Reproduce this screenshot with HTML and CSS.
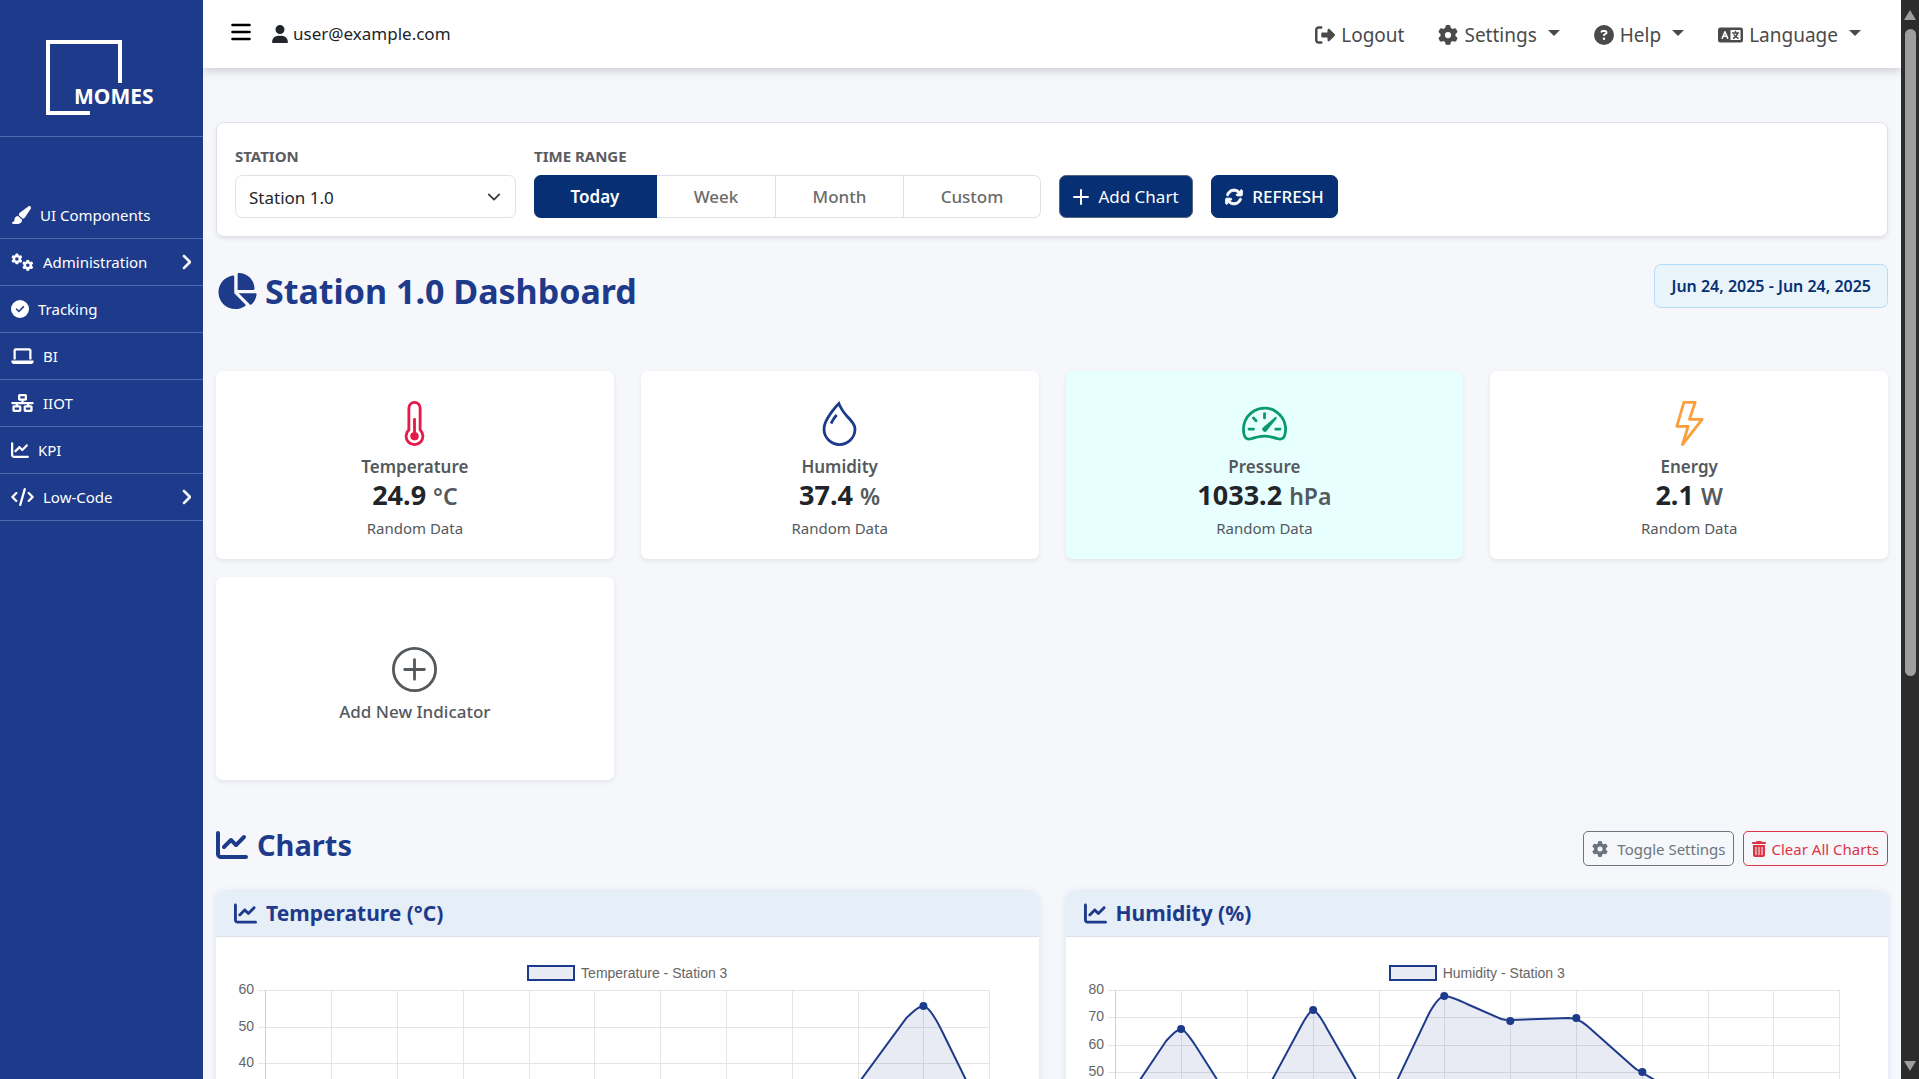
FILE: index.html
```html
<!DOCTYPE html>
<html lang="en">
<head>
<meta charset="utf-8">
<meta name="viewport" content="width=device-width, initial-scale=1">
<title>MOMES - Station 1.0 Dashboard</title>
<link rel="stylesheet" href="styles.css">
</head>
<body>
<svg class="sprite" aria-hidden="true">
  <symbol id="i-gear" viewBox="0 0 512 512"><path d="M495.9 166.6c3.2 8.7 .5 18.4-6.4 24.6l-43.3 39.4c1.1 8.3 1.7 16.8 1.7 25.4s-.6 17.1-1.7 25.4l43.3 39.4c6.9 6.2 9.6 15.9 6.4 24.6c-4.4 11.9-9.7 23.3-15.8 34.3l-4.7 8.1c-6.6 11-14 21.4-22.1 31.2c-5.9 7.2-15.7 9.6-24.5 6.8l-55.7-17.7c-13.4 10.3-28.2 18.9-44 25.4l-12.5 57.1c-2 9.1-9 16.3-18.2 17.8c-13.8 2.3-28 3.5-42.5 3.5s-28.7-1.2-42.5-3.5c-9.2-1.5-16.2-8.7-18.2-17.8l-12.5-57.1c-15.8-6.5-30.6-15.1-44-25.4L83.1 425.9c-8.8 2.8-18.6 .3-24.5-6.8c-8.1-9.8-15.5-20.2-22.1-31.2l-4.7-8.1c-6.1-11-11.4-22.4-15.8-34.3c-3.2-8.7-.5-18.4 6.4-24.6l43.3-39.4C64.6 273.1 64 264.6 64 256s.6-17.1 1.7-25.4L22.4 191.2c-6.9-6.2-9.6-15.9-6.4-24.6c4.4-11.9 9.7-23.3 15.8-34.3l4.7-8.1c6.6-11 14-21.4 22.1-31.2c5.9-7.2 15.7-9.6 24.5-6.8l55.7 17.7c13.4-10.3 28.2-18.9 44-25.4l12.5-57.1c2-9.1 9-16.3 18.2-17.8C227.3 1.2 241.5 0 256 0s28.7 1.2 42.5 3.5c9.2 1.5 16.2 8.7 18.2 17.8l12.5 57.1c15.8 6.5 30.6 15.1 44 25.4l55.7-17.7c8.8-2.8 18.6-.3 24.5 6.8c8.1 9.8 15.5 20.2 22.1 31.2l4.7 8.1c6.1 11 11.4 22.4 15.8 34.3zM256 336a80 80 0 1 0 0-160 80 80 0 1 0 0 160z"/></symbol>
  <symbol id="i-line" viewBox="0 0 512 512"><path d="M64 64c0-17.7-14.3-32-32-32S0 46.3 0 64V400c0 44.2 35.8 80 80 80H480c17.7 0 32-14.3 32-32s-14.3-32-32-32H80c-8.8 0-16-7.2-16-16V64zm406.6 86.6c12.5-12.5 12.5-32.8 0-45.3s-32.8-12.5-45.3 0L320 210.7l-57.4-57.4c-12.5-12.5-32.8-12.5-45.3 0l-112 112c-12.5 12.5-12.5 32.8 0 45.3s32.8 12.5 45.3 0L240 221.3l57.4 57.4c12.5 12.5 32.8 12.5 45.3 0l128-128z"/></symbol>
  <symbol id="i-right" viewBox="0 0 320 512"><path stroke="currentColor" stroke-width="26" d="M310.6 233.4c12.5 12.5 12.5 32.8 0 45.3l-192 192c-12.5 12.5-32.8 12.5-45.3 0s-12.5-32.8 0-45.3L242.7 256 73.4 86.6c-12.5-12.5-12.5-32.8 0-45.3s32.8-12.5 45.3 0l192 192z"/></symbol>
</svg>
<div class="app">
  <aside class="sidebar">
    <a class="brand" href="#" aria-label="MOMES home">
      <svg class="logo" viewBox="0 0 112 77"><path d="M74 43V2H2v71h42" fill="none" stroke="#fff" stroke-width="4"/><text class="logo-text" x="28" y="64">MOMES</text></svg>
    </a>
    <nav class="side-nav" aria-label="Main">
      <a href="#"><svg class="w20" viewBox="0 0 576 512"><path d="M339.3 367.1c27.3-3.9 51.9-19.4 67.2-42.9L568.2 74.1c12.6-19.5 9.4-45.3-7.6-61.2S517.7-4.4 499.1 9.6L262.4 187.2c-24 18-38.2 46.1-38.4 76.1L339.3 367.1zm-19.6 25.4l-116-104.4C143.9 290.3 96 339.6 96 400c0 3.9 .2 7.8 .6 11.6C98.4 429.1 86.4 448 68.8 448H64c-17.7 0-32 14.3-32 32s14.3 32 32 32H208c61.9 0 112-50.1 112-112c0-2.5-.1-5-.2-7.5z"/></svg><span>UI Components</span></a>
      <a href="#"><svg class="w23" viewBox="0 0 640 512"><use href="#i-gear" x="0" y="10" width="320" height="320"/><use href="#i-gear" x="310" y="190" width="320" height="320"/></svg><span>Administration</span><svg class="chev" viewBox="0 0 320 512"><use href="#i-right"/></svg></a>
      <a href="#"><svg class="w18" viewBox="0 0 512 512"><circle cx="256" cy="256" r="256"/><path d="M160 262l64 64 128-130" fill="none" stroke="#1e3a8a" stroke-width="46" stroke-linecap="round"/></svg><span>Tracking</span></a>
      <a href="#"><svg class="w23" viewBox="0 0 640 512"><path d="M128 32C92.7 32 64 60.7 64 96V352h64V96H512V352h64V96c0-35.3-28.7-64-64-64H128zM19.2 384C8.6 384 0 392.6 0 403.2C0 445.6 34.4 480 76.8 480H563.2c42.4 0 76.8-34.4 76.8-76.8c0-10.6-8.6-19.2-19.2-19.2H19.2z"/></svg><span>BI</span></a>
      <a href="#"><svg class="w23" viewBox="0 0 640 512"><path d="M256 64H384v64H256V64zM240 0c-26.5 0-48 21.5-48 48v96c0 26.5 21.5 48 48 48h48v32H32c-17.7 0-32 14.3-32 32s14.3 32 32 32h96v32H80c-26.5 0-48 21.5-48 48v96c0 26.5 21.5 48 48 48H240c26.5 0 48-21.5 48-48V368c0-26.5-21.5-48-48-48H192V288H448v32H400c-26.5 0-48 21.5-48 48v96c0 26.5 21.5 48 48 48H560c26.5 0 48-21.5 48-48V368c0-26.5-21.5-48-48-48H512V288h96c17.7 0 32-14.3 32-32s-14.3-32-32-32H352V192h48c26.5 0 48-21.5 48-48V48c0-26.5-21.5-48-48-48H240zM96 448V384H224v64H96zm320-64H544v64H416V384z"/></svg><span>IIOT</span></a>
      <a href="#"><svg class="w18"><use href="#i-line"/></svg><span>KPI</span></a>
      <a href="#"><svg class="w23" viewBox="0 0 640 512"><path d="M392.8 1.2c-17-4.9-34.7 5-39.6 22l-128 448c-4.9 17 5 34.7 22 39.6s34.7-5 39.6-22l128-448c4.9-17-5-34.7-22-39.6zm80.6 120.1c-12.5 12.5-12.5 32.8 0 45.3L562.7 256l-89.4 89.4c-12.5 12.5-12.5 32.8 0 45.3s32.8 12.5 45.3 0l112-112c12.5-12.5 12.5-32.8 0-45.3l-112-112c-12.5-12.5-32.8-12.5-45.3 0zm-306.7 0c-12.5-12.5-32.8-12.5-45.3 0l-112 112c-12.5 12.5-12.5 32.8 0 45.3l112 112c12.5 12.5 32.8 12.5 45.3 0s12.5-32.8 0-45.3L77.3 256l89.4-89.4c12.5-12.5 12.5-32.8 0-45.3z"/></svg><span>Low-Code</span><svg class="chev" viewBox="0 0 320 512"><use href="#i-right"/></svg></a>
    </nav>
  </aside>

  <div class="page">
    <header class="topbar">
      <button class="menu-btn" type="button" aria-label="Toggle menu"><svg viewBox="0 0 20 18"><path d="M1.500 2h17M1.500 9h17M1.500 16h17" stroke="#000" stroke-width="2.600" stroke-linecap="round"/></svg></button>
      <div class="user"><svg viewBox="0 0 448 512"><path d="M224 256A128 128 0 1 0 224 0a128 128 0 1 0 0 256zm-45.700 48C79.800 304 0 383.800 0 482.300C0 498.700 13.300 512 29.700 512H418.300c16.400 0 29.700-13.300 29.700-29.700C448 383.800 368.200 304 269.700 304H178.300z"/></svg><span>user@example.com</span></div>
      <nav class="top-nav" aria-label="Account">
        <a href="#"><svg class="w20" viewBox="0 0 512 512"><path d="M377.9 105.9L500.7 228.7c7.2 7.2 11.3 17.1 11.3 27.3s-4.1 20.1-11.3 27.3L377.9 406.1c-6.4 6.4-15 9.9-24 9.9c-18.7 0-33.9-15.2-33.9-33.9l0-62.1-128 0c-17.7 0-32-14.3-32-32l0-64c0-17.7 14.3-32 32-32l128 0 0-62.1c0-18.7 15.2-33.9 33.9-33.9c9 0 17.6 3.6 24 9.9zM160 96L96 96c-17.7 0-32 14.3-32 32l0 256c0 17.7 14.3 32 32 32l64 0c17.7 0 32 14.3 32 32s-14.3 32-32 32l-64 0c-53 0-96-43-96-96L0 128C0 75 43 32 96 32l64 0c17.7 0 32 14.3 32 32s-14.3 32-32 32z"/></svg><span>Logout</span></a>
        <a href="#"><svg class="w20"><use href="#i-gear"/></svg><span>Settings</span><i class="caret"></i></a>
        <a href="#"><svg class="w20" viewBox="0 0 512 512"><path d="M256 512A256 256 0 1 0 256 0a256 256 0 1 0 0 512zM169.8 165.300c7.900-22.300 29.100-37.300 52.800-37.300h58.300c34.900 0 63.100 28.300 63.100 63.100c0 22.600-12.100 43.500-31.700 54.800L280 264.400c-.2 13-10.900 23.600-24 23.600c-13.300 0-24-10.700-24-24V250.500c0-8.600 4.600-16.500 12.100-20.800l44.300-25.400c4.700-2.700 7.600-7.700 7.600-13.100c0-8.400-6.800-15.100-15.100-15.100H222.600c-3.400 0-6.400 2.100-7.500 5.300l-.4 1.200c-4.400 12.500-18.200 19-30.600 14.600s-19-18.200-14.600-30.600l.4-1.200zM224 352a32 32 0 1 1 64 0 32 32 0 1 1 -64 0z"/></svg><span>Help</span><i class="caret"></i></a>
        <a href="#"><svg class="w25" viewBox="0 0 640 512"><rect y="64" width="640" height="384" rx="64"/><path d="M320 128h256v256H320z" fill="#fff"/><path d="M108 338l70-164 70 164M132 286h92" fill="none" stroke="#fff" stroke-width="40" stroke-linecap="round" stroke-linejoin="round"/><path d="M448 166v34M374 204h150M502 206c-14 60-52 108-106 134M412 250c22 40 62 74 102 90" fill="none" stroke="#4a4a4a" stroke-width="38" stroke-linecap="round"/></svg><span>Language</span><i class="caret"></i></a>
      </nav>
    </header>

    <main>
      <form class="filters">
        <div class="field">
          <label for="station">Station</label>
          <div class="select"><select id="station"><option>Station 1.0</option></select><svg viewBox="0 0 16 16"><path d="M2 5l6 6 6-6" fill="none" stroke="#343a40" stroke-width="2" stroke-linecap="round" stroke-linejoin="round"/></svg></div>
        </div>
        <div class="field" role="group" aria-labelledby="range-label">
          <span class="label" id="range-label">Time Range</span>
          <div class="segments">
            <button type="button" class="seg seg-today active" aria-pressed="true">Today</button>
            <button type="button" class="seg seg-week">Week</button>
            <button type="button" class="seg seg-month">Month</button>
            <button type="button" class="seg seg-custom">Custom</button>
          </div>
        </div>
        <button type="button" class="btn-solid add"><svg viewBox="0 0 16 16"><path d="M8 1v14M1 8h14" stroke="#fff" stroke-width="2" stroke-linecap="round"/></svg>Add Chart</button>
        <button type="button" class="btn-solid refresh"><svg viewBox="0 0 512 512"><path d="M105.1 202.6c7.7-21.8 20.2-42.3 37.8-59.8c62.5-62.5 163.8-62.5 226.3 0L386.3 160H352c-17.7 0-32 14.3-32 32s14.3 32 32 32H463.5h.4c17.7 0 32-14.3 32-32V80c0-17.7-14.3-32-32-32s-32 14.3-32 32v35.200L414.400 97.600c-87.500-87.500-229.300-87.500-316.800 0C73.200 122 55.600 150.700 44.800 181.400c-5.900 16.700 2.900 34.900 19.500 40.800s34.900-2.900 40.800-19.500zM39 289.300c-5 1.500-9.800 4.200-13.700 8.200c-4 4-6.700 8.800-8.100 14c-.3 1.200-.6 2.500-.8 3.800c-.3 1.700-.4 3.400-.4 5.100V432c0 17.700 14.300 32 32 32s32-14.300 32-32V396.900l17.600 17.500c87.500 87.400 229.300 87.400 316.700 0c24.400-24.400 42.100-53.100 52.900-83.700c5.900-16.700-2.900-34.900-19.500-40.800s-34.900 2.900-40.800 19.500c-7.700 21.800-20.200 42.300-37.800 59.800c-62.500 62.500-163.800 62.500-226.300 0l-.1-.1L125.600 352H160c17.700 0 32-14.300 32-32s-14.300-32-32-32H48.400c-1.600 0-3.200 .1-4.800 .3s-3.100 .5-4.600 1z" fill="#fff" stroke="#fff" stroke-width="24"/></svg>REFRESH</button>
      </form>

      <div class="title-row">
        <h1><svg viewBox="0 0 576 512"><path d="M304 240V16.6c0-9 7-16.6 16-16.6C443.7 0 544 100.3 544 224c0 9-7.6 16-16.6 16H304zM32 272C32 150.7 122.1 50.3 239 34.3c9.2-1.3 17 6.1 17 15.4V288L412.5 444.5c6.7 6.7 6.2 17.7-1.5 23.1C371.8 495.6 323.8 512 272 512C139.5 512 32 404.6 32 272zm526.4 16c9.3 0 16.6 7.8 15.4 17c-7.7 55.9-34.6 105.6-73.9 142.3c-6 5.6-15.4 5.2-21.2-.7L320 288H558.4z"/></svg>Station 1.0 Dashboard</h1>
        <p class="dates">Jun 24, 2025 - Jun 24, 2025</p>
      </div>

      <section class="indicators" aria-label="Indicators">
        <article class="card">
          <svg class="red" viewBox="0 0 16 16"><path d="M9.5 12.5a1.5 1.5 0 1 1-2-1.415V6.500a.5.5 0 0 1 1 0v4.585a1.500 1.500 0 0 1 1 1.415z"/><path d="M5.500 2.500a2.500 2.500 0 0 1 5 0v7.550a3.500 3.500 0 1 1-5 0V2.500zM8 1a1.500 1.500 0 0 0-1.500 1.500v7.987l-.167.15a2.500 2.500 0 1 0 3.333 0l-.166-.15V2.500A1.500 1.500 0 0 0 8 1z"/></svg>
          <h2>Temperature</h2><p class="value">24.9 <span>°C</span></p><p class="note">Random Data</p>
        </article>
        <article class="card">
          <svg class="blue" viewBox="0 0 16 16"><path fill-rule="evenodd" d="M7.21.8C7.69.295 8 0 8 0c.109.363.234.708.371 1.038.812 1.946 2.073 3.35 3.197 4.6C12.878 7.096 14 8.345 14 10a6 6 0 0 1-12 0C2 6.668 5.58 2.517 7.21.8zm.413 1.021A31.25 31.25 0 0 0 5.794 3.990c-.726.95-1.436 2.008-1.960 3.070C3.304 8.133 3 9.138 3 10a5 5 0 0 0 10 0c0-1.201-.796-2.157-2.181-3.700l-.03-.032C9.750 5.110 8.500 3.720 7.623 1.820z"/><path d="M4.553 7.776c.82-1.641 1.717-2.753 2.093-3.130l.708.708c-.29.29-1.128 1.311-1.907 2.870l-.894-.448z"/></svg>
          <h2>Humidity</h2><p class="value">37.4 <span>%</span></p><p class="note">Random Data</p>
        </article>
        <article class="card highlight">
          <svg class="green" viewBox="0 0 16 16"><path d="M8 4a.5.5 0 0 1 .5.5V6a.5.5 0 0 1-1 0V4.500A.5.5 0 0 1 8 4zM3.732 5.732a.5.5 0 0 1 .707 0l.915.914a.5.5 0 1 1-.708.708l-.914-.915a.5.5 0 0 1 0-.707zM2 10a.5.5 0 0 1 .5-.5h1.586a.5.5 0 0 1 0 1H2.500A.5.5 0 0 1 2 10zm9.500 0a.5.5 0 0 1 .5-.5h1.500a.5.5 0 0 1 0 1H12a.5.5 0 0 1-.5-.5zm.754-4.246a.389.389 0 0 0-.527-.02L7.547 9.310a.91.91 0 1 0 1.302 1.258l3.434-4.297a.389.389 0 0 0-.029-.518z"/><path fill-rule="evenodd" d="M0 10a8 8 0 1 1 15.547 2.661c-.442 1.253-1.845 1.602-2.932 1.250C11.309 13.488 9.475 13 8 13c-1.474 0-3.310.488-4.615.911-1.087.352-2.490.003-2.932-1.250A7.988 7.988 0 0 1 0 10zm8-7a7 7 0 0 0-6.603 9.329c.203.575.923.876 1.680.63C4.397 12.533 6.358 12 8 12s3.604.532 4.923.96c.757.245 1.477-.056 1.680-.631A7 7 0 0 0 8 3z"/></svg>
          <h2>Pressure</h2><p class="value">1033.2 <span>hPa</span></p><p class="note">Random Data</p>
        </article>
        <article class="card">
          <svg class="orange" viewBox="0 0 16 16"><path d="M5.520.359A.5.5 0 0 1 6 0h4a.5.5 0 0 1 .474.658L8.694 6H12.500a.5.5 0 0 1 .395.807l-7 9a.5.5 0 0 1-.873-.454L6.823 9.500H3.500a.5.5 0 0 1-.48-.641l2.500-8.500zM6.374 1 4.168 8.500H7.500a.5.5 0 0 1 .478.647L6.780 13.040 11.478 7H8a.5.5 0 0 1-.474-.658L9.306 1H6.374z"/></svg>
          <h2>Energy</h2><p class="value">2.1 <span>W</span></p><p class="note">Random Data</p>
        </article>
        <button type="button" class="card add-card">
          <svg viewBox="0 0 16 16"><path d="M8 4.500v7M4.500 8h7" stroke="currentColor" stroke-linecap="round"/><circle cx="8" cy="8" r="7.500" fill="none" stroke="currentColor"/></svg>
          <span>Add New Indicator</span>
        </button>
      </section>

      <div class="charts-head">
        <h2><svg><use href="#i-line"/></svg>Charts</h2>
        <div class="actions">
          <button type="button" class="btn-line grey"><svg><use href="#i-gear"/></svg>Toggle Settings</button>
          <button type="button" class="btn-line danger"><svg viewBox="0 0 448 512"><path fill-rule="evenodd" d="M135 18c5-11 16-18 29-18h120c12 0 23 7 28 18l8 14h96c18 0 32 14 32 32s-14 32-32 32H32C14 96 0 82 0 64s14-32 32-32h96zM32 128h384v320c0 35-29 64-64 64H96c-35 0-64-29-64-64zm80 64v256h32V192zm96 0v256h32V192zm96 0v256h32V192z"/></svg>Clear All Charts</button>
        </div>
      </div>

      <section class="charts" aria-label="Charts">
        <article class="chart">
          <h3><svg><use href="#i-line"/></svg>Temperature (°C)</h3>
          <div class="legend"><i></i>Temperature - Station 3</div>
          <svg class="plot" viewBox="0 -2 822 302" role="img" aria-label="Temperature line chart">
            <path class="grid" d="M42 7H773M42 44H773M42 80H773M42 117H773M42 154H773M115 7V290M181 7V290M247 7V290M313 7V290M378 7V290M444 7V290M510 7V290M576 7V290M642 7V290M707 7V290M773 7V290"/>
            <path class="axis" d="M49 7V290"/>
            <path class="area" d="M576 190L690 35Q702 23 707 23Q714 24 727 51L756 110L773 150V290H576z"/>
            <path class="line" d="M576 190L690 35Q702 23 707 23Q714 24 727 51L756 110L773 150"/>
            <circle cx="707" cy="23" r="4"/>
            <g class="ticks"><text x="38" y="11">60</text><text x="38" y="48">50</text><text x="38" y="84">40</text></g>
          </svg>
        </article>
        <article class="chart">
          <h3><svg><use href="#i-line"/></svg>Humidity (%)</h3>
          <div class="legend"><i></i>Humidity - Station 3</div>
          <svg class="plot" viewBox="0 -2 822 302" role="img" aria-label="Humidity line chart">
            <path class="grid" d="M42 7H773M42 34H773M42 62H773M42 89H773M42 117H773M115 7V290M181 7V290M247 7V290M313 7V290M378 7V290M444 7V290M510 7V290M576 7V290M642 7V290M707 7V290M773 7V290"/>
            <path class="axis" d="M49 7V290"/>
            <path class="area" d="M49 134L100 58Q111 46 115 46Q119 47 129 62L150 95Q181 160 207 95L235 43Q243 28 247 27Q252 29 261 46L289 95Q312 150 332 95L363 30Q372 14 378 13Q384 13 403 22L435 36Q438 37 444 37L502 35Q512 35 521 43L566 83Q570 87 575 89L610 110V290H49z"/>
            <path class="line" d="M49 134L100 58Q111 46 115 46Q119 47 129 62L150 95Q181 160 207 95L235 43Q243 28 247 27Q252 29 261 46L289 95Q312 150 332 95L363 30Q372 14 378 13Q384 13 403 22L435 36Q438 37 444 37L502 35Q512 35 521 43L566 83Q570 87 575 89L610 110"/>
            <circle cx="115" cy="46" r="4"/><circle cx="247" cy="27" r="4"/><circle cx="378" cy="13" r="4"/><circle cx="444" cy="38" r="4"/><circle cx="510" cy="35" r="4"/><circle cx="576" cy="89" r="4"/>
            <g class="ticks"><text x="38" y="11">80</text><text x="38" y="38">70</text><text x="38" y="66">60</text><text x="38" y="93">50</text></g>
          </svg>
        </article>
      </section>
    </main>
  </div>

  <div class="scrollbar" aria-hidden="true">
    <i class="up"></i><i class="thumb"></i><i class="down"></i>
  </div>
</div>
</body>
</html>
```

FILE: styles.css
```css
* { box-sizing: border-box; }
body, h1, h2, h3, p { margin: 0; }
body {
  height: 100vh;
  overflow: hidden;
  background: #f5f7fb;
  color: #212529;
  font: 15px/24px "Noto Sans", sans-serif;
}
a { color: inherit; text-decoration: none; }
button, select { font: inherit; color: inherit; }
svg { flex: none; fill: currentColor; }
.sprite { display: none; }
.w18 { width: 18px; height: 18px; }
.w20 { width: 20px; height: 20px; }
.w23 { width: 23px; height: 18px; }
.w25 { width: 25px; height: 20px; }

.app {
  display: grid;
  grid-template-columns: 203px minmax(0, 1fr) 18px;
  height: 100vh;
}

/* Sidebar */
.sidebar { background: #1e3a8a; color: #fff; }
.brand {
  display: block;
  height: 137px;
  padding: 40px 46px;
  border-bottom: 1px solid #4a6db0;
}
.logo { display: block; width: 112px; height: 77px; }
.logo-text { font: 700 21px "Noto Sans", sans-serif; }
.side-nav { margin-top: 55px; font-size: 15px; }
.side-nav a {
  display: flex;
  align-items: center;
  gap: 9px;
  height: 47px;
  padding: 0 12px 0 11px;
  border-bottom: 1px solid #4a6db0;
}
.side-nav .chev { width: 10px; height: 16px; margin-left: auto; }

/* Top bar */
.page { display: flex; flex-direction: column; min-width: 0; overflow: hidden; }
.topbar {
  display: flex;
  flex: none;
  align-items: center;
  height: 68px;
  padding: 0 40px 0 28px;
  background: #fff;
  box-shadow: 0 2px 10px rgba(0, 0, 0, .2);
}
.menu-btn { padding: 0; border: 0; background: none; margin-bottom: 4px; }
.menu-btn svg { display: block; width: 20px; height: 18px; }
.user { display: flex; align-items: center; gap: 5px; margin-left: 21px; font-size: 17px; }
.user svg { width: 16px; height: 18px; }
.top-nav { display: flex; gap: 34px; margin-left: auto; padding-top: 2px; color: #4a4a4a; font-size: 19px; }
.top-nav a { display: flex; align-items: center; gap: 6px; }
.caret {
  margin: 0 0 4px 5px;
  border: 6px solid transparent;
  border-top-color: currentColor;
  border-bottom: 0;
}

/* Filters */
main { padding: 54px 13px 0; }
.filters {
  display: flex;
  align-items: flex-end;
  gap: 18px;
  height: 115px;
  padding: 0 18px 18px;
  background: #fff;
  border: 1px solid #dee2e6;
  border-radius: 8px;
  box-shadow: 0 2px 4px rgba(0, 0, 0, .08);
}
.field label, .field .label {
  display: block;
  margin-bottom: 7px;
  color: #5a5c60;
  font-size: 15px;
  font-weight: 700;
  text-transform: uppercase;
}
.select { display: grid; width: 281px; align-items: center; }
.select > * { grid-area: 1 / 1; }
.select select {
  height: 43px;
  padding: 2px 13px 0;
  background: #fff;
  border: 1px solid #dee2e6;
  border-radius: 7px;
  appearance: none;
  font-size: 17px;
}
.select svg { justify-self: end; width: 14px; height: 14px; margin-right: 15px; pointer-events: none; }
.segments { display: flex; height: 43px; }
.seg {
  padding: 0;
  background: #fff;
  border: 1px solid #dee2e6;
  border-left-width: 0;
  color: #6b6b6b;
  font-size: 17px;
  font-weight: 500;
}
.seg-today { width: 123px; border-radius: 7px 0 0 7px; }
.seg-week { width: 119px; }
.seg-month { width: 128px; }
.seg-custom { width: 137px; border-radius: 0 7px 7px 0; }
.seg.active { background: #063073; border-color: #063073; color: #fff; font-weight: 600; }
.btn-solid {
  display: flex;
  align-items: center;
  justify-content: center;
  gap: 9px;
  height: 43px;
  padding: 0;
  background: #063073;
  border: 1px solid #063073;
  border-radius: 7px;
  color: #fff;
  font-size: 17px;
}
.btn-solid svg { width: 16px; height: 16px; }
.btn-solid.add { width: 134px; border-color: #54657f; }
.btn-solid.refresh { width: 127px; font-weight: 500; }
.btn-solid.refresh svg { width: 18px; height: 18px; }

/* Titles */
.title-row { display: flex; justify-content: space-between; margin-top: 27px; height: 107px; }
h1 {
  display: flex;
  align-items: center;
  gap: 8px;
  height: 54px;
  color: #1e3a8a;
  font-size: 34px;
  font-weight: 700;
}
h1 svg { width: 41px; height: 36px; }
.dates {
  display: flex;
  align-items: center;
  height: 44px;
  padding: 0 16px;
  background: #eaf4fb;
  border: 1px solid #b6dcfb;
  border-radius: 7px;
  color: #063073;
  font-size: 16px;
  font-weight: 600;
}

/* Indicators */
.indicators { display: grid; grid-template-columns: repeat(4, minmax(0, 1fr)); gap: 18px 27px; }
.card {
  display: flex;
  flex-direction: column;
  align-items: center;
  height: 188px;
  padding-top: 30px;
  background: #fff;
  border: 0;
  border-radius: 7px;
  box-shadow: 0 2px 5px rgba(0, 0, 0, .08);
}
.card.highlight { background: #e8ffff; }
.card svg { width: 45px; height: 45px; }
.card h2 { margin-top: 10px; color: #54595e; font-size: 17px; font-weight: 600; line-height: 22px; }
.value { font-size: 27px; font-weight: 700; line-height: 34px; }
.value span { color: #54595e; font-size: 23px; font-weight: 600; }
.note { margin-top: 3px; color: #54595e; font-size: 15px; }
.red { color: #e5194a; }
.blue { color: #1e3a8a; }
.green { color: #0a9a6c; }
.orange { color: #fb9f3c; }
.add-card { height: 203px; padding: 13px 0 0; justify-content: center; color: #54595e; }
.add-card span { margin-top: 8px; font-size: 17px; font-weight: 500; }

/* Charts */
.charts-head { display: flex; justify-content: space-between; margin: 47px 0 24px; height: 39px; }
.charts-head h2 { display: flex; align-items: center; gap: 9px; height: 36px; color: #1e3a8a; font-size: 29px; }
.charts-head h2 svg { width: 32px; height: 32px; }
.actions { display: flex; gap: 9px; padding-top: 4px; }
.btn-line {
  display: flex;
  align-items: center;
  justify-content: center;
  height: 35px;
  padding: 0 8px;
  background: none;
  border: 1px solid currentColor;
  border-radius: 5px;
}
.btn-line.grey { gap: 9px; color: #6c757d; }
.btn-line.danger { gap: 5px; color: #dc3545; }
.btn-line svg { width: 16px; height: 16px; }
.btn-line.danger svg { width: 14px; }
.charts { display: grid; grid-template-columns: repeat(2, minmax(0, 1fr)); gap: 27px; }
.chart { background: #fff; border-radius: 9px; box-shadow: 0 2px 7px rgba(30, 58, 138, .12); }
.chart h3 {
  display: flex;
  align-items: center;
  gap: 9px;
  height: 47px;
  padding: 0 18px;
  background: #e6eef8;
  border-bottom: 1px solid #dbe1ea;
  border-radius: 9px 9px 0 0;
  color: #1e3a8a;
  font-size: 21px;
  font-weight: 700;
}
.chart h3 svg { width: 23px; height: 23px; }
.legend {
  display: flex;
  justify-content: center;
  align-items: center;
  gap: 6px;
  height: 16px;
  margin-top: 28px;
  color: #666;
  font: 14px/16px "Liberation Sans", sans-serif;
}
.legend i { width: 48px; height: 16px; background: #e8ebf3; border: 2px solid #1e3a8a; }
.plot { display: block; width: 100%; fill: #1e3a8a; }
.grid, .axis { fill: none; stroke: #e5e5e5; shape-rendering: crispEdges; }
.axis { stroke: #cfcfcf; }
.area { fill: rgba(30, 58, 138, .1); }
.line { fill: none; stroke: #1e3a8a; stroke-width: 2; }
.ticks { fill: #666; font: 14px "Liberation Sans", sans-serif; text-anchor: end; }

/* Page scroll track */
.scrollbar {
  display: flex;
  flex-direction: column;
  align-items: center;
  padding: 10px 0 8px;
  background: #2c2c2c;
}
.up, .down { border: 6px solid transparent; }
.up { border-top: 0; border-bottom: 10px solid #9e9e9e; }
.down { margin-top: auto; border-bottom: 0; border-top: 10px solid #9e9e9e; }
.thumb { width: 11px; height: 61%; margin-top: 9px; background: #9e9e9e; border-radius: 6px; }
```
